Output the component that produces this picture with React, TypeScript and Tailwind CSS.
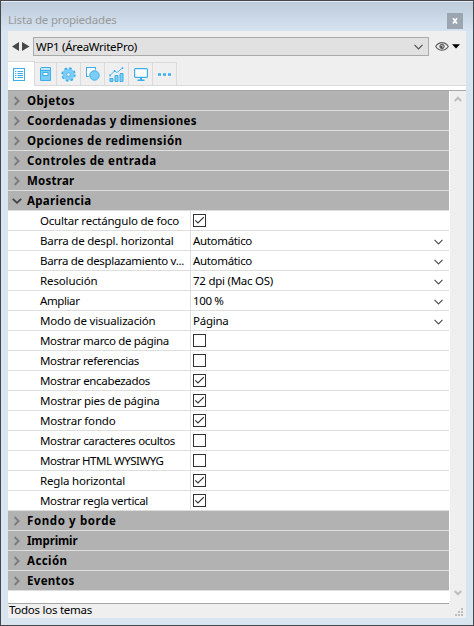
import React, { useLayoutEffect, useRef, useState } from "react";

type Section = { label: string; width: number };
type Item = Section & { value?: string; valueWidth?: number; checked?: boolean };

const closedTop: Section[] = [
  { label: "Objetos", width: 48 },
  { label: "Coordenadas y dimensiones", width: 170 },
  { label: "Opciones de redimensión", width: 155.5 },
  { label: "Controles de entrada", width: 129.5 },
  { label: "Mostrar", width: 47.5 },
];

const closedBottom: Section[] = [
  { label: "Fondo y borde", width: 89.5 },
  { label: "Imprimir", width: 50.5 },
  { label: "Acción", width: 40.5 },
  { label: "Eventos", width: 47.5 },
];

const items: Item[] = [
  { label: "Ocultar rectángulo de foco", width: 139, checked: true },
  { label: "Barra de despl. horizontal", width: 133.5, value: "Automático", valueWidth: 59 },
  { label: "Barra de desplazamiento v...", width: 144, value: "Automático", valueWidth: 59 },
  { label: "Resolución", width: 57.5, value: "72 dpi (Mac OS)", valueWidth: 80 },
  { label: "Ampliar", width: 39.5, value: "100 %", valueWidth: 30.5 },
  { label: "Modo de visualización", width: 115.5, value: "Página", valueWidth: 35.5 },
  { label: "Mostrar marco de página", width: 129, checked: false },
  { label: "Mostrar referencias", width: 99, checked: false },
  { label: "Mostrar encabezados", width: 110, checked: true },
  { label: "Mostrar pies de página", width: 119.5, checked: true },
  { label: "Mostrar fondo", width: 75.5, checked: true },
  { label: "Mostrar caracteres ocultos", width: 135, checked: false },
  { label: "Mostrar HTML WYSIWYG", width: 123.5, checked: false },
  { label: "Regla horizontal", width: 85, checked: true },
  { label: "Mostrar regla vertical", width: 108, checked: true },
];

// Spreads or tightens the letters so that the label takes the given width.
function Fit({ text, width, className = "" }: { text: string; width: number; className?: string }) {
  const ref = useRef<HTMLSpanElement>(null);
  const [spacing, setSpacing] = useState(0);
  useLayoutEffect(() => {
    if (ref.current) {
      setSpacing((width - ref.current.getBoundingClientRect().width) / text.length);
    }
  }, [text, width]);
  return (
    <span ref={ref} className={`inline-block shrink-0 ${className}`} style={{ letterSpacing: spacing }}>
      {text}
    </span>
  );
}

function ChevronDown({ className = "" }: { className?: string }) {
  return (
    <svg className={className} width="9" height="6" viewBox="0 0 9 6" fill="none" stroke="#505050" strokeWidth="1.2">
      <path d="M.5 .8 4.5 4.8 8.5 .8" />
    </svg>
  );
}

function Header({ label, width, open = false }: Section & { open?: boolean }) {
  return (
    <div className="flex h-5 items-center border-b border-[#dedede] bg-[#b2b2b2]">
      <svg className="ml-1 shrink-0" width="10" height="10" viewBox="0 0 10 10" fill="none" strokeWidth="1.8">
        {open ? <path d="M.8 2.8 5 6.8 9.2 2.8" stroke="#404040" /> : <path d="M2.6 1 6.6 5 2.6 9" stroke="#7b7b7b" />}
      </svg>
      <Fit text={label} width={width} className="mt-px ml-[5px] font-bold" />
    </div>
  );
}

function Check({ on }: { on: boolean }) {
  return (
    <svg width="13" height="13" viewBox="0 0 13 13" fill="none">
      <rect x=".5" y=".5" width="12" height="12" fill="#fff" stroke="#333" />
      {on && <path d="M2.3 6.3 5 9 10.8 3.2" stroke="#333" strokeWidth="1.2" />}
    </svg>
  );
}

function Row({ label, width, value, valueWidth = 0, checked }: Item) {
  return (
    <div className="flex h-5 border-b border-[#dedede] bg-white">
      <div className="flex w-[183px] items-center border-r border-[#dedede] pl-8">
        <Fit text={label} width={width} className="mt-px" />
      </div>
      <div className="flex flex-1 items-center pl-[2px]">
        {value === undefined ? (
          <Check on={!!checked} />
        ) : (
          <>
            <Fit text={value} width={valueWidth} className="mt-px" />
            <ChevronDown className="mt-0.5 mr-[6px] ml-auto" />
          </>
        )}
      </div>
    </div>
  );
}

const blue = "#3daee9";
const soft = "#7acdf8";

function Tab({ children, width }: { children: React.ReactNode; width: string }) {
  return (
    <div className={`flex h-[23px] items-center justify-center border-t border-r border-[#dadada] ${width}`}>{children}</div>
  );
}

export default function App() {
  return (
    <div className="flex h-[626px] w-[474px] flex-col overflow-hidden border border-[#48464d] bg-[#d9e4f1] font-['Noto_Sans','Open_Sans',sans-serif] text-[11.5px] leading-[18px] whitespace-nowrap text-black">
      <div className="flex h-[30px] shrink-0 items-center border-t border-[#e4eef7] bg-linear-to-b from-[#becbda] to-[#d6e3f1] pr-[10px] pl-[7px]">
        <Fit text="Lista de propiedades" width={108.5} className="mt-[7px] text-[#999]" />
        <div className="mt-[8px] ml-auto flex h-4 w-4 items-center justify-center bg-[#9ca6b0]">
          <svg width="6" height="6" viewBox="0 0 6 6" fill="none" stroke="#fff" strokeWidth="1.7">
            <path d="M1 .3 5 5.5M5 .3 1 5.5" />
          </svg>
        </div>
      </div>

      <div className="mx-[7px] flex h-[587px] shrink-0 flex-col bg-[#efefef]">
        <div className="flex h-[30px] shrink-0 pt-[6px] pl-[4px]">
          <svg className="mt-[5px]" width="18" height="9" viewBox="0 0 18 9" fill="#484848">
            <path d="M7 0V9L0 4.5ZM10 0V9L17.5 4.5Z" />
          </svg>
          <div className="ml-[3px] flex h-[19px] w-[396px] items-center border border-[#aaa] bg-[#e1e1e1] pr-[5px] pl-[2px]">
            <Fit text="WP1 (ÁreaWritePro)" width={101} />
            <ChevronDown className="mt-px ml-auto" />
          </div>
          <svg className="mt-[5px] ml-[6px]" width="25" height="9" viewBox="0 0 25 9" fill="none">
            <path d="M.7 4.5C2.5 1.7 4.6.7 7 .7S11.5 1.7 13.3 4.5C11.5 7.2 9.4 8.2 7 8.2S2.5 7.2.7 4.5Z" stroke="#606060" strokeWidth="1.2" />
            <circle cx="7" cy="4.4" r="2.2" fill="#aaa" stroke="#555" />
            <circle cx="6.3" cy="5" r="1" fill="#444" />
            <path d="M17 2.2H25L21 6.5Z" fill="#000" />
          </svg>
        </div>

        <div className="flex h-[25px] shrink-0 items-end border-b border-[#dadada]">
          <div className="-mb-px flex h-[25px] w-[27px] items-center border-t border-r border-[#dadada] bg-white pl-[5px]">
            <svg width="12" height="13" viewBox="0 0 12 13" fill="none" stroke={blue}>
              <rect x=".5" y=".5" width="11" height="12" />
              <path d="M2 3.5H3.3M4.5 3.5H10M2 5.5H3.3M4.5 5.5H10M2 7.5H3.3M4.5 7.5H10M2 9.5H3.3M4.5 9.5H10" />
            </svg>
          </div>
          <Tab width="w-[22px]">
            <svg className="mr-px" width="11" height="14" viewBox="0 0 11 14">
              <path d="M.5 2Q.5.5 2 .5H10.5V13.5H.5Z" fill={soft} stroke={blue} />
              <path d="M1 2H10" stroke="#fff" strokeWidth="1" />
              <path d="M.5 3.5H10.5" stroke={blue} />
              <rect x="3" y="5.5" width="5" height="3" fill="#fff" stroke={blue} />
            </svg>
          </Tab>
          <Tab width="w-6">
            <svg width="15" height="15" viewBox="0 0 15 15">
              <circle cx="7.5" cy="7.5" r="6" fill={soft} stroke={blue} strokeWidth="2.4" strokeDasharray="2.4 2.31" />
              <circle cx="7.5" cy="7.5" r="5.6" fill={soft} />
              <circle cx="7.5" cy="7.5" r="1.8" fill="#efefef" stroke={blue} strokeWidth=".8" />
            </svg>
          </Tab>
          <Tab width="w-6">
            <svg className="ml-px" width="14" height="14" viewBox="0 0 14 14">
              <rect x=".5" y=".5" width="9" height="9" fill="#fff" stroke={blue} />
              <circle cx="8.5" cy="8.5" r="6" fill="#efefef" />
              <circle cx="8.5" cy="8.5" r="4.7" fill={soft} stroke={blue} />
            </svg>
          </Tab>
          <Tab width="w-6">
            <svg width="15" height="15" viewBox="0 0 15 15" fill={soft} stroke={blue}>
              <path d="M.9 11.5H4V14.5H.9ZM6 8.5H9V14.5H6ZM11 6.5H14V14.5H11Z" />
              <path d="M1 8.5 5.5 4 8 5.5 13.5 1" fill="none" strokeWidth=".9" />
              <path d="M.3 8.5H1.8M4.8 4H6.2M12.8 1.2H14.3" strokeWidth="1.8" />
            </svg>
          </Tab>
          <Tab width="w-6">
            <svg width="14" height="13" viewBox="0 0 14 13">
              <rect x=".6" y=".6" width="12.8" height="8.8" rx="1" fill="#fff" stroke={blue} strokeWidth="1.2" />
              <path d="M6 10H8V11.5H10.5V13H3.5V11.5H6Z" fill={blue} />
            </svg>
          </Tab>
          <Tab width="w-6">
            <svg className="mt-px" width="13" height="3" viewBox="0 0 13 3" fill={blue}>
              <path d="M0 .2H3V2.8H0ZM5 .2H8V2.8H5ZM10 .2H13V2.8H10Z" />
            </svg>
          </Tab>
        </div>

        <div className="h-1 shrink-0 bg-white" />
        <div className="h-px shrink-0 bg-[#a6a6a6]" />

        <div className="flex h-[527px] shrink-0">
          <div className="flex w-[441px] flex-col">
            <div className="h-[512px] bg-white">
              {closedTop.map((h) => <Header key={h.label} {...h} />)}
              <Header label="Apariencia" width={64.5} open />
              {items.map((i) => <Row key={i.label} {...i} />)}
              {closedBottom.map((h) => <Header key={h.label} {...h} />)}
            </div>
            <div className="h-px bg-[#a6a6a6]" />
            <div className="flex h-[14px] items-center pl-px leading-[14px]">
              <Fit text="Todos los temas" width={83} className="-mt-[3px]" />
            </div>
          </div>
          <div className="flex w-[17px] flex-col items-center">
            <div className="flex h-[510px] w-full flex-col items-center justify-between border-l border-white pt-[5px] pb-[5px]">
              <svg width="8" height="6" viewBox="0 0 8 6" fill="none" stroke="#bdbdbd" strokeWidth="2">
                <path d="M.8 5 4 1.7 7.2 5" />
              </svg>
              <svg width="8" height="6" viewBox="0 0 8 6" fill="none" stroke="#bdbdbd" strokeWidth="2">
                <path d="M.8 1 4 4.3 7.2 1" />
              </svg>
            </div>
            <svg className="mt-[7px] mr-[3px] self-end" width="8" height="8" viewBox="0 0 8 8" fill="#bdbdbd">
              <path d="M6 0H8V2H6ZM3 3H5V5H3ZM6 3H8V5H6ZM0 6H2V8H0ZM3 6H5V8H3ZM6 6H8V8H6Z" />
            </svg>
          </div>
        </div>
      </div>
    </div>
  );
}
